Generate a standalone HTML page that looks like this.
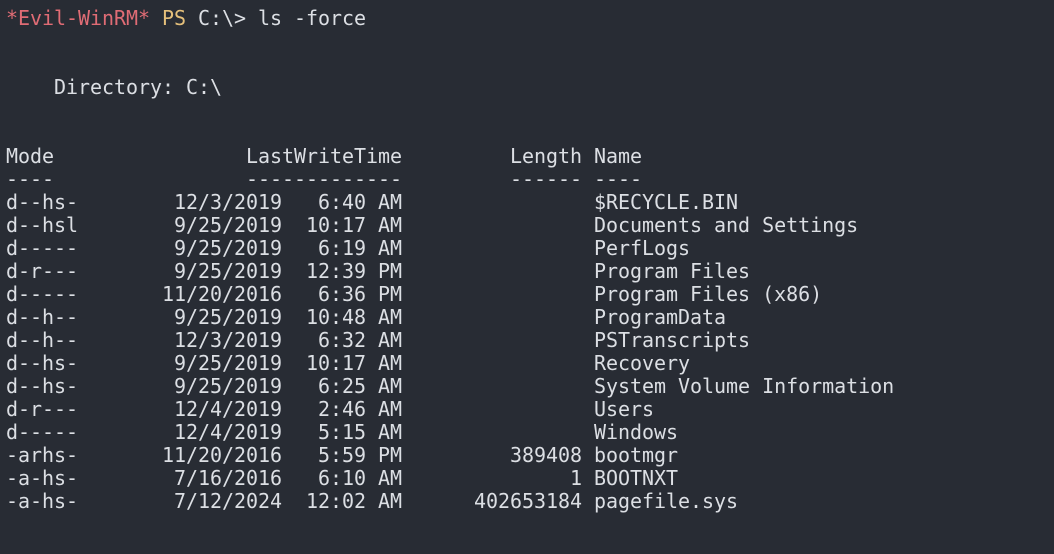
<!DOCTYPE html>
<html><head><meta charset="utf-8"><style>
html,body{margin:0;padding:0;background:#282c34;width:1054px;height:554px;overflow:hidden}
pre{margin:0;position:absolute;left:6px;top:7px;font-family:"DejaVu Sans Mono","Liberation Mono",monospace;font-size:20px;letter-spacing:-0.04px;line-height:23px;color:#dcdfe4;white-space:pre}
.r{color:#e06c75}.y{color:#e5c07b}
</style></head><body><pre><span class="r">*Evil-WinRM*</span> <span class="y">PS</span> C:\&gt; ls -force


    Directory: C:\


Mode                LastWriteTime         Length Name
----                -------------         ------ ----
d--hs-        12/3/2019   6:40 AM                $RECYCLE.BIN
d--hsl        9/25/2019  10:17 AM                Documents and Settings
d-----        9/25/2019   6:19 AM                PerfLogs
d-r---        9/25/2019  12:39 PM                Program Files
d-----       11/20/2016   6:36 PM                Program Files (x86)
d--h--        9/25/2019  10:48 AM                ProgramData
d--h--        12/3/2019   6:32 AM                PSTranscripts
d--hs-        9/25/2019  10:17 AM                Recovery
d--hs-        9/25/2019   6:25 AM                System Volume Information
d-r---        12/4/2019   2:46 AM                Users
d-----        12/4/2019   5:15 AM                Windows
-arhs-       11/20/2016   5:59 PM         389408 bootmgr
-a-hs-        7/16/2016   6:10 AM              1 BOOTNXT
-a-hs-        7/12/2024  12:02 AM      402653184 pagefile.sys
</pre></body></html>
